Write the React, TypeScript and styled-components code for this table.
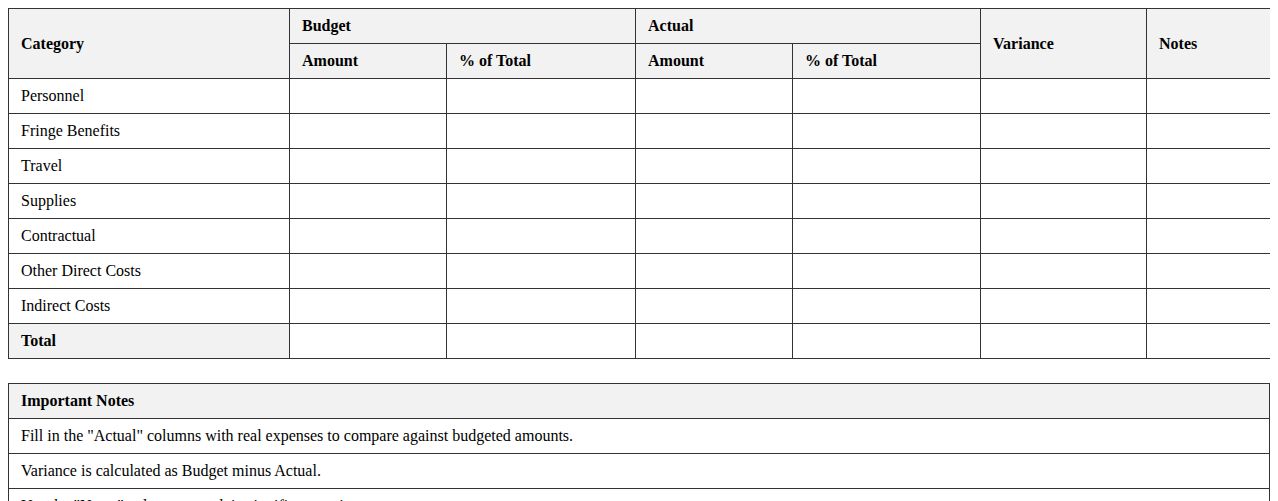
import styled, { createGlobalStyle } from 'styled-components';

const GlobalStyle = createGlobalStyle`
  body {
    margin: 8px;
    font-family: "Liberation Serif", "Times New Roman", serif;
    font-size: 16px;
    color: #000;
    background: #fff;
  }
`;

const columns = [281, 157, 189, 157, 188, 166, 124];

const categories = [
  'Personnel',
  'Fringe Benefits',
  'Travel',
  'Supplies',
  'Contractual',
  'Other Direct Costs',
  'Indirect Costs',
];

const notes = [
  'Fill in the "Actual" columns with real expenses to compare against budgeted amounts.',
  'Variance is calculated as Budget minus Actual.',
  'Use the "Notes" column to explain significant variances.',
];

const App = () => {
  return (
    <>
      <GlobalStyle />
      <Table>
        <colgroup>
          {columns.map((w, i) => (
            <col key={i} style={{ width: w }} />
          ))}
        </colgroup>
        <thead>
          <tr>
            <Th rowSpan={2}>Category</Th>
            <Th colSpan={2}>Budget</Th>
            <Th colSpan={2}>Actual</Th>
            <Th rowSpan={2}>Variance</Th>
            <Th rowSpan={2}>Notes</Th>
          </tr>
          <tr>
            <Th>Amount</Th>
            <Th>% of Total</Th>
            <Th>Amount</Th>
            <Th>% of Total</Th>
          </tr>
        </thead>
        <tbody>
          {categories.map((c) => (
            <tr key={c}>
              <Td>{c}</Td>
              {columns.slice(1).map((_, i) => (
                <Td key={i} />
              ))}
            </tr>
          ))}
          <tr>
            <Td $total>Total</Td>
            {columns.slice(1).map((_, i) => (
              <Td key={i} />
            ))}
          </tr>
        </tbody>
      </Table>

      <Table>
        <thead>
          <tr>
            <Th>Important Notes</Th>
          </tr>
        </thead>
        <tbody>
          {notes.map((n) => (
            <tr key={n}>
              <Td>{n}</Td>
            </tr>
          ))}
        </tbody>
      </Table>
    </>
  );
};

const Table = styled.table`
  width: 100%;
  border-collapse: collapse;
  table-layout: fixed;
  margin-bottom: 24px;
  font-family: "Liberation Serif", "Times New Roman", serif;
  font-size: 16px;
  color: #000;
`;

const Th = styled.th`
  border: 1px solid #333;
  background: #f2f2f2;
  padding: 8px 12px;
  text-align: left;
  font-weight: bold;
  height: 18px;
  font-family: "Liberation Serif", "Times New Roman", serif;
`;

const Td = styled.td<{ $total?: boolean }>`
  border: 1px solid #333;
  padding: 8px 12px;
  text-align: left;
  height: 18px;
  font-family: "Liberation Serif", "Times New Roman", serif;
  background: ${({ $total }) => ($total ? '#f2f2f2' : '#fff')};
  font-weight: ${({ $total }) => ($total ? 'bold' : 'normal')};
`;

export default App;
